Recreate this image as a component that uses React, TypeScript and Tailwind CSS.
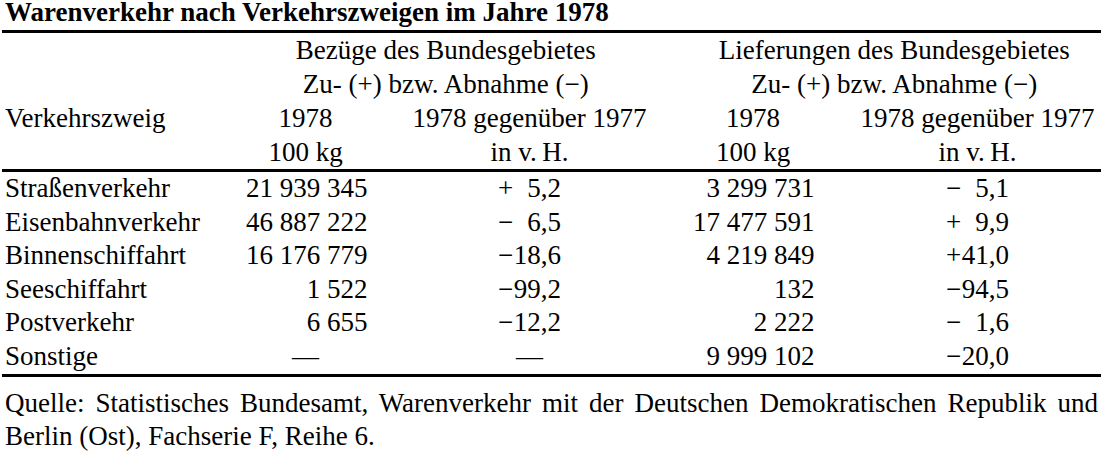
import React from "react";

type Row = {
  name: string;
  inKg: string | null;
  inPct: [string, string] | null;
  outKg: string;
  outPct: [string, string];
};

const rows: Row[] = [
  { name: "Straßenverkehr", inKg: "21 939 345", inPct: ["+", "5,2"], outKg: "3 299 731", outPct: ["\u2212", "5,1"] },
  { name: "Eisenbahnverkehr", inKg: "46 887 222", inPct: ["\u2212", "6,5"], outKg: "17 477 591", outPct: ["+", "9,9"] },
  { name: "Binnenschiffahrt", inKg: "16 176 779", inPct: ["\u2212", "18,6"], outKg: "4 219 849", outPct: ["+", "41,0"] },
  { name: "Seeschiffahrt", inKg: "1 522", inPct: ["\u2212", "99,2"], outKg: "132", outPct: ["\u2212", "94,5"] },
  { name: "Postverkehr", inKg: "6 655", inPct: ["\u2212", "12,2"], outKg: "2 222", outPct: ["\u2212", "1,6"] },
  { name: "Sonstige", inKg: null, inPct: null, outKg: "9 999 102", outPct: ["\u2212", "20,0"] },
];

const grid = "grid grid-cols-[195px_124px_237px_123px_239px] gap-x-[43.5px] pl-[5px]";

const Rule = () => <div className="mx-[2px] h-[3px] bg-black" />;

const Change = ({ v }: { v: [string, string] | null }) =>
  v ? (
    <span className="inline-flex w-[63px] justify-between">
      <span>{v[0]}</span>
      <span>{v[1]}</span>
    </span>
  ) : (
    <span>—</span>
  );

export default function App() {
  return (
    <div className="w-[1103px] h-[453px] overflow-hidden bg-white text-black font-['Liberation_Serif','Times_New_Roman',serif] text-[27px]">
      <h1 className="pl-[5px] font-bold leading-[25px] whitespace-nowrap">
        Warenverkehr nach Verkehrszweigen im Jahre 1978
      </h1>
      <div className="mt-[5px]">
        <Rule />
      </div>

      {/* Kopf */}
      <div className={`${grid} leading-[34px] whitespace-nowrap`}>
        <div />
        <div className="col-span-2 text-center">Bezüge des Bundesgebietes</div>
        <div className="col-span-2 text-center">Lieferungen des Bundesgebietes</div>

        <div />
        <div className="col-span-2 text-center">Zu- (+) bzw. Abnahme (−)</div>
        <div className="col-span-2 text-center">Zu- (+) bzw. Abnahme (−)</div>

        <div>Verkehrszweig</div>
        <div className="text-center">1978</div>
        <div className="text-center">1978 gegenüber 1977</div>
        <div className="text-center">1978</div>
        <div className="text-center">1978 gegenüber 1977</div>

        <div />
        <div className="text-center">100 kg</div>
        <div className="text-center">in v.&#8201;H.</div>
        <div className="text-center">100 kg</div>
        <div className="text-center">in v.&#8201;H.</div>
      </div>
      <Rule />

      {/* Daten */}
      <div className={`${grid} leading-[33.6px] whitespace-nowrap`}>
        {rows.map((r) => (
          <React.Fragment key={r.name}>
            <div>{r.name}</div>
            <div className={r.inKg ? "text-right" : "text-center"}>{r.inKg ?? "—"}</div>
            <div className="text-center">
              <Change v={r.inPct} />
            </div>
            <div className="text-right">{r.outKg}</div>
            <div className="text-center">
              <Change v={r.outPct} />
            </div>
          </React.Fragment>
        ))}
      </div>
      <Rule />

      <p className="mt-[10px] px-[5px] leading-[33px] text-justify">
        Quelle: Statistisches Bundesamt, Warenverkehr mit der Deutschen Demokratischen Republik und
        Berlin (Ost), Fachserie F, Reihe 6.
      </p>
    </div>
  );
}
